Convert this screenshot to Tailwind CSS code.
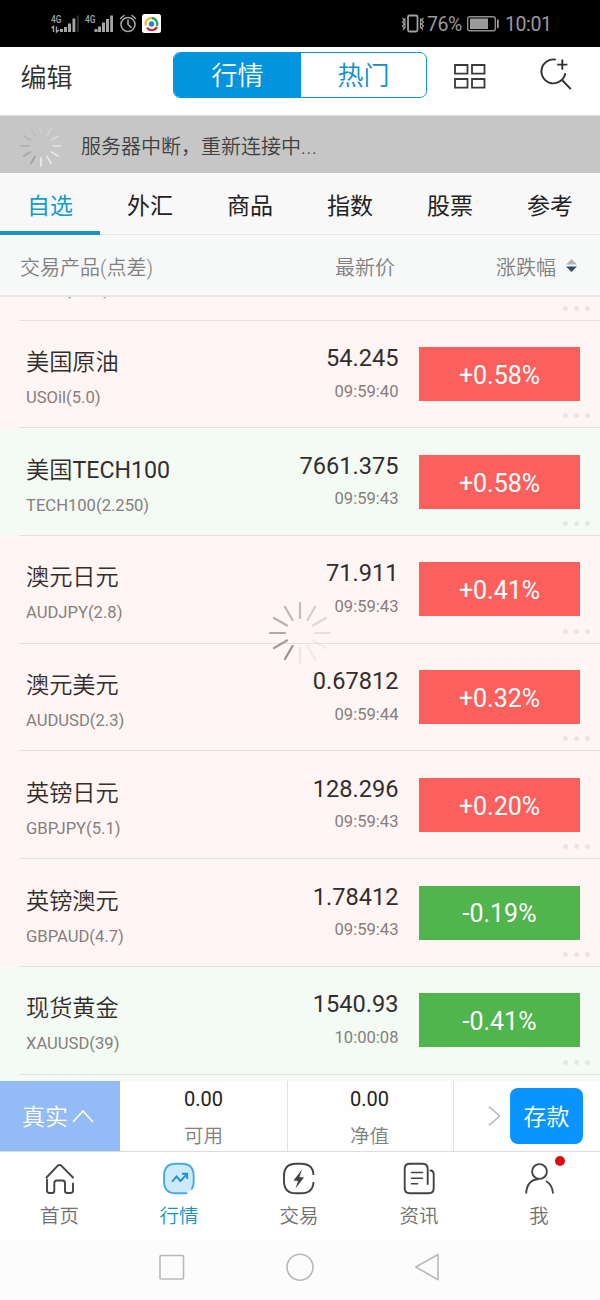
<!DOCTYPE html>
<html lang="zh-CN">
<head>
    <meta charset="UTF-8">
    <meta name="viewport" content="width=device-width, initial-scale=1.0">
    <title>行情</title>
    <script src="https://cdn.jsdelivr.net/npm/@tailwindcss/browser@4"></script>
</head>
<body class="bg-white">
<div class="relative w-[600px] h-[1300px] overflow-hidden flex flex-col whitespace-nowrap font-['Roboto','Noto_Sans_CJK_SC',sans-serif]">

    <!-- Status bar -->
    <div class="h-[47px] shrink-0 bg-black flex items-center text-[#9a9a9a]">
        <svg class="ml-[50px] w-[112px] h-[32px]" viewBox="50 8 112 32" fill="none">
            <g fill="#a5a5a5">
                <text x="51" y="22.5" font-size="10" font-weight="500" textLength="10.5" lengthAdjust="spacingAndGlyphs">4G</text>
                <text x="85" y="22.5" font-size="10" font-weight="500" textLength="10.5" lengthAdjust="spacingAndGlyphs">4G</text>
                <path d="M60 29h3v3h-3zM64 27h3v5h-3zM68 23.500h3v8.500h-3zM72.500 18.500h2.800v13.500h-2.800zM94.500 29h3v3h-3zM98 26.500h3v5.500h-3zM102 22.500h3v9.500h-3zM106 19h3v13h-3zM110.200 15.500h2.800v16.500h-2.800z"/>
                <path d="M76.700 15.500h2.300v16.500h-2.300z" fill="#2c2c2c"/>
            </g>
            <path d="M51.500 28l2-1.500V32M56.500 26.500V32l2.500-2" stroke="#a5a5a5" stroke-width="1.400"/>
            <g stroke="#a5a5a5" stroke-width="1.600" stroke-linecap="round">
                <circle cx="128" cy="24.500" r="7"/>
                <path d="M128 20v4.500l3 2.800M120.500 18.500l3.500-3M135.500 18.500l-3.500-3"/>
            </g>
            <rect x="142" y="14" width="19" height="19" rx="2.500" fill="#fff"/>
            <g stroke-width="2.400">
                <path d="M145.800 25.500a6 6 0 0 1 5.200-7.500" stroke="#e8c62b"/>
                <path d="M151.500 18a6 6 0 0 1 5.500 8" stroke="#2ca348"/>
                <path d="M157 27a6 6 0 0 1-10 .8" stroke="#d5263a"/>
            </g>
            <circle cx="151.500" cy="24" r="2.700" fill="#2483cf"/>
        </svg>
        <svg class="ml-[239px] w-[25px] h-[22px]" viewBox="401 13 25 22" fill="none" stroke="#a0a0a0">
            <rect x="408" y="15.500" width="9.500" height="16" rx="1.500" stroke-width="1.800"/>
            <path d="M402.500 18l2 2-2 2 2 2-2 2 2 2-1.500 2M405 18.500v10M420.500 18.500v10M423.500 18l-2 2 2 2-2 2 2 2-2 2 1.500 2" stroke-width="1.200"/>
        </svg>
        <span class="ml-[1px] pt-[2px] w-[36px] text-[19.5px] tracking-[-0.4px]">76%</span>
        <svg class="ml-[3px] w-[34px] h-[18px]" viewBox="466 15 34 18" fill="none">
            <rect x="467.700" y="16.700" width="27.600" height="14" rx="2" stroke="#8e8e8e" stroke-width="1.400"/>
            <path d="M470 18.500h18v10.500h-18z" fill="#9a9a9a"/>
            <path d="M497 19.500h1.800v8.500h-1.800z" fill="#9a9a9a"/>
        </svg>
        <span class="ml-[5px] pt-[2px] text-[19.5px] tracking-[-0.4px]">10:01</span>
    </div>

    <!-- Header -->
    <div class="h-[69px] shrink-0 flex items-start border-b border-[#ddd]">
        <div class="w-[173px] h-[59px] pt-[3px] pl-[20.5px] flex items-center text-[26px] font-[350] text-[#303030]">编辑</div>
        <div class="mt-[5px] w-[254px] h-[46px] flex rounded-[7px] border-[1.5px] border-[#0e95d6] overflow-hidden text-[26px] font-[350]">
            <div class="w-[127px] pt-[3px] bg-[#0394de] text-white flex items-center justify-center">行情</div>
            <div class="flex-1 pt-[3px] text-[#0d8fca] flex items-center justify-center">热门</div>
        </div>
        <svg class="ml-[26px] mt-[16px] w-[34px] h-[27px]" viewBox="453 63 34 27" fill="none" stroke="#3a3a3a" stroke-width="1.800">
            <path d="M455 65h12.500v8.600h-12.500zM472 65h12.500v8.600h-12.500zM455 79h12.500v8.600h-12.500zM472 79h12.500v8.600h-12.500z"/>
        </svg>
        <svg class="ml-[50px] mt-[9px] w-[38px] h-[38px]" viewBox="537 56 38 38" fill="none" stroke="#303030" stroke-width="1.900">
            <path d="M555.800 59.600a12 12 0 1 0 9.500 13.600M562.500 80.500l8.300 8.700M562.300 59.400v10.400M557.200 64.600h10.200"/>
        </svg>
    </div>

    <!-- Reconnect banner -->
    <div class="h-[57px] shrink-0 bg-[#c6c6c6] flex items-center">
        <svg class="ml-[19px] mt-[2px] w-[44px] h-[44px]" viewBox="-22 -22 44 44" stroke-width="1.600" stroke-linecap="round">
            <path d="M0-12v-8" stroke="#cccccc"/>
            <path d="M6-10.400l4-6.900" stroke="#d2d2d2"/>
            <path d="M10.400-6l6.900-4" stroke="#dadada"/>
            <path d="M12 0h8" stroke="#e2e2e2"/>
            <path d="M10.400 6l6.900 4" stroke="#e6e6e6"/>
            <path d="M6 10.400l4 6.900" stroke="#ebebeb"/>
            <path d="M0 12v8" stroke="#efefef"/>
            <path d="M-6 10.400l-4 6.900" stroke="#9c9c9c"/>
            <path d="M-10.400 6l-6.900 4" stroke="#a5a5a5"/>
            <path d="M-12 0h-8" stroke="#acacac"/>
            <path d="M-10.400-6l-6.900-4" stroke="#b4b4b4"/>
            <path d="M-6-10.400l-4-6.900" stroke="#bdbdbd"/>
        </svg>
        <span class="ml-[18px] pt-[5px] text-[20px] font-[350] text-[#404040]">服务器中断，重新连接中<span class="tracking-[0.7px]">...</span></span>
    </div>

    <!-- Category tabs -->
    <div class="h-[62px] shrink-0 bg-[#f8f8f8] border-b border-[#e6e8e8] flex text-[23px] text-[#222]">
        <div class="w-[100px] h-[62px] pt-[10px] border-b-4 border-[#1895c6] text-[#149bd2] flex items-center justify-center">自选</div>
        <div class="w-[100px] h-[62px] flex items-center justify-center pt-[6px]">外汇</div>
        <div class="w-[100px] h-[62px] flex items-center justify-center pt-[6px]">商品</div>
        <div class="w-[100px] h-[62px] flex items-center justify-center pt-[6px]">指数</div>
        <div class="w-[100px] h-[62px] flex items-center justify-center pt-[6px]">股票</div>
        <div class="w-[100px] h-[62px] flex items-center justify-center pt-[6px]">参考</div>
    </div>

    <!-- Column titles -->
    <div class="h-[62px] shrink-0 bg-[#f7f8f8] border-b-2 border-[#ebe6e6] flex items-center pt-[5px] text-[20px] font-[350] text-[#808080]">
        <span class="w-[200px] pl-[20px]">交易产品(点差)</span>
        <span class="w-[195px] text-right">最新价</span>
        <span class="w-[161px] text-right">涨跌幅</span>
        <svg class="ml-[9px] mb-[4px] w-[13px] h-[16px]" viewBox="0 0 13 16">
            <path d="M6.500 1l5.500 5.500h-11z" fill="#b3b3b3"/>
            <path d="M1 8.500h11l-5.500 5.500z" fill="#2d4d72"/>
        </svg>
    </div>

    <!-- Quotes, scrolled part of the way down -->
    <div class="h-[784px] shrink-0 overflow-hidden">
        <div id="quotes" class="mt-[-84.2px]"></div>
    </div>

    <!-- Account summary -->
    <div class="h-[71px] shrink-0 flex border-b border-[#dcdcdc] bg-[#fefefe]">
        <div class="w-[120px] h-[70px] bg-[#93bbf6] text-white flex items-center pl-[22px] text-[23px] font-[350]">
            <span class="pt-[4px]">真实</span>
            <svg class="ml-[4px] w-[22px] h-[16px]" viewBox="0 0 22 16" fill="none" stroke="#fff" stroke-width="1.600"><path d="M1 14L11 3l10 11"/></svg>
        </div>
        <div class="w-[168px] border-r border-[#e4e4e4] flex flex-col items-center text-[20px]">
            <span class="mt-[4px] leading-[28px] text-[#222]">0.00</span>
            <span class="mt-[9.5px] leading-[28px] font-[350] text-[19.5px] text-[#808080]">可用</span>
        </div>
        <div class="w-[166px] pr-[2px] border-r border-[#e4e4e4] flex flex-col items-center text-[20px]">
            <span class="mt-[4px] leading-[28px] text-[#222]">0.00</span>
            <span class="mt-[9.5px] leading-[28px] font-[350] text-[19.5px] text-[#808080]">净值</span>
        </div>
        <svg class="ml-[33px] mt-[24px] w-[14px] h-[22px]" viewBox="0 0 14 22" fill="none" stroke="#b5b5b5" stroke-width="1.500"><path d="M2 1.500L12.500 11 2 20.500"/></svg>
        <div class="ml-[9px] mt-[7px] pt-[4px] w-[73px] h-[56px] rounded-[8px] bg-[#0a94ff] text-white text-[23px] font-[350] flex items-center justify-center">存款</div>
    </div>

    <!-- Bottom navigation -->
    <div class="h-[87px] shrink-0 flex bg-white text-[19.5px] font-[350] text-[#707070]">
        <div class="w-[119px] pt-[9px] flex flex-col items-center">
            <svg class="w-[36px] h-[36px]" viewBox="-18 -18 36 36" fill="none" stroke="#444" stroke-width="1.900" stroke-linecap="round" stroke-linejoin="round">
                <path d="M-13.500-1.500L-2.500-13.200Q-.5-15 1.500-13.200L13-1.500M-13 .5V11.500Q-13 14-10.500 14H-8Q-5.700 14-5.700 11.700V4Q-5.700 1.500-3.200 1.500H2.500Q5 1.500 5 4V11.700Q5 14 7.300 14H10.500Q13 14 13 11.500V4.500"/>
            </svg>
            <span class="mt-[5.500px] leading-[28px]">首页</span>
        </div>
        <div class="w-[120px] pt-[9px] flex flex-col items-center text-[#1593bd]">
            <svg class="w-[36px] h-[36px]" viewBox="-18 -18 36 36" fill="none" stroke="#45aae8" stroke-width="1.900" stroke-linecap="round">
                <path d="M7 14.300H-4Q-15 14-15-1Q-15-15.300-3-15.300H2Q14.700-15.300 14.700-3V3Q14.700 8 12.500 10.500L7 14.300" fill="#cdeafb" stroke="none"/>
                <path d="M7.500 14.300H-3Q-15 14.300-15 2V-3Q-15-15.300-3-15.300H2.500Q14.700-15.300 14.700-3V3Q14.700 7 12.800 10"/>
                <path d="M-7 2.800L-2.500-2.500 1.500 2 8-5M3-5.300H8.200V0" stroke="#2691cf" stroke-linecap="butt"/>
            </svg>
            <span class="mt-[5.500px] leading-[28px]">行情</span>
        </div>
        <div class="w-[120px] pt-[9px] flex flex-col items-center">
            <svg class="w-[36px] h-[36px]" viewBox="-18 -18 36 36" fill="none" stroke="#444" stroke-width="1.900">
                <path d="M14.500-4Q14-15.300 2-15.300H-3Q-15-15.300-15-3V2Q-15 14.300-3 14.300H2Q14 14.300 14.500 3"/>
                <path d="M3-9.500L-5.500 1.500-1 2-3.500 9.500 5-1.500.500-2z" fill="#444" stroke="none"/>
            </svg>
            <span class="mt-[5.500px] leading-[28px]">交易</span>
        </div>
        <div class="w-[120px] pt-[9px] flex flex-col items-center">
            <svg class="w-[36px] h-[36px]" viewBox="-18 -18 36 36" fill="none" stroke="#444" stroke-width="1.900" stroke-linecap="round">
                <path d="M8.700 5V-10Q8.700-15.200 3.700-15.200H-9.300Q-14.300-15.200-14.300-10.200V9.300Q-14.300 14.300-9.300 14.300H9.700Q14.700 14.300 14.700 9.300V-5Q14.700-8.500 11.500-8.500"/>
                <path d="M-7.500-6.500H3.500M-7.500-.8H3.500M-7.500 4.700H-1.500" stroke-width="1.600"/>
            </svg>
            <span class="mt-[5.500px] leading-[28px]">资讯</span>
        </div>
        <div class="relative w-[120px] pt-[9px] flex flex-col items-center">
            <svg class="w-[36px] h-[36px]" viewBox="-18 -18 36 36" fill="none" stroke="#444" stroke-width="1.900">
                <circle cx="0.500" cy="-7.500" r="7.400"/>
                <path d="M-12.800 14.500Q-12.300 1-.3 0M7 2Q13.500 6 14 14.500"/>
            </svg>
            <span class="mt-[5.500px] leading-[28px]">我</span>
            <div class="absolute left-[76px] top-[4px] w-[10px] h-[10px] rounded-full bg-[#e20a12]"></div>
        </div>
    </div>

    <!-- System keys -->
    <div class="h-[61px] shrink-0 bg-[#fcfcfc]">
        <svg class="w-[600px] h-[61px]" viewBox="0 1239 600 61" fill="none" stroke="#b9b9b9" stroke-width="1.600" stroke-linejoin="round">
            <rect x="160" y="1255.500" width="23.500" height="23.500" rx="1"/>
            <circle cx="300" cy="1267.200" r="13"/>
            <path d="M438 1254.500v25.200L415.800 1267z"/>
        </svg>
    </div>

    <!-- Loading spinner over the list -->
    <svg class="absolute left-[268px] top-[601px] w-[64px] h-[64px]" viewBox="-32 -32 64 64" stroke="#817878" stroke-width="2.200" stroke-linecap="round">
        <path d="M0-15v-15" opacity=".45"/>
        <path d="M7.500-13l7.500-13" opacity=".32"/>
        <path d="M13-7.500l13-7.500" opacity=".24"/>
        <path d="M15 0h15" opacity=".17"/>
        <path d="M13 7.500l13 7.500" opacity=".08"/>
        <path d="M7.500 13l7.500 13" opacity=".1"/>
        <path d="M0 15v15" opacity=".12"/>
        <path d="M-7.500 13l-7.500 13" opacity=".8"/>
        <path d="M-13 7.500l-13 7.500" opacity=".7"/>
        <path d="M-15 0h-15" opacity=".62"/>
        <path d="M-13-7.500l-13-7.500" opacity=".55"/>
        <path d="M-7.500-13l-7.500-13" opacity=".5"/>
    </svg>
</div>

<script>
    // name, symbol(spread), price, time, change, row tint
    const quotes = [
        ['', 'US30(12.0)', '', '', '', 'red'],
        ['美国原油', 'USOil(5.0)', '54.245', '09:59:40', '+0.58%', 'red'],
        ['美国TECH100', 'TECH100(2.250)', '7661.375', '09:59:43', '+0.58%', 'green'],
        ['澳元日元', 'AUDJPY(2.8)', '71.911', '09:59:43', '+0.41%', 'red'],
        ['澳元美元', 'AUDUSD(2.3)', '0.67812', '09:59:44', '+0.32%', 'red'],
        ['英镑日元', 'GBPJPY(5.1)', '128.296', '09:59:43', '+0.20%', 'red'],
        ['英镑澳元', 'GBPAUD(4.7)', '1.78412', '09:59:43', '-0.19%', 'red'],
        ['现货黄金', 'XAUUSD(39)', '1540.93', '10:00:08', '-0.41%', 'green'],
        ['', '', '', '', '', 'green']
    ];

    document.getElementById('quotes').innerHTML = quotes.map(([name, symbol, price, time, change, tint]) => `
        <div class="h-[107.72px] ${tint === 'red' ? 'bg-[#fff5f4]' : 'bg-[#f3fbf4]'}">
            <div class="relative ml-[19px] h-full border-b border-[#e6e0df] flex pl-[7px] ${symbol ? '' : 'hidden'}">
                <div class="w-[220px] pt-[24.5px] flex flex-col">
                    <span class="h-[34px] leading-[34px] text-[23.2px] font-[350] text-[#332d2d]">${name.replace(/([A-Z0-9]+)/, '<span class="font-normal">$1</span>')}</span>
                    <span class="mt-[7px] leading-[24px] text-[16.6px] text-[#857f7e]">${symbol}</span>
                </div>
                <div class="w-[152.5px] pt-[20.5px] flex flex-col items-end">
                    <span class="h-[34px] leading-[34px] text-[23.6px] text-[#332d2d]">${price}</span>
                    <span class="mt-[4.5px] leading-[24px] text-[16.6px] text-[#857f7e]">${time}</span>
                </div>
                <div class="ml-[20.5px] mt-[26.5px] w-[161px] h-[54px] pt-[3px] flex items-center justify-center text-white text-[25px] ${change[0] === '-' ? 'bg-[#50b54c]' : 'bg-[#fc605c]'}">${change}</div>
                <div class="absolute right-[10px] bottom-[9px] flex gap-[6px]">
                    <i class="w-[5px] h-[5px] rounded-full bg-black/7"></i>
                    <i class="w-[5px] h-[5px] rounded-full bg-black/7"></i>
                    <i class="w-[5px] h-[5px] rounded-full bg-black/7"></i>
                </div>
            </div>
        </div>`).join('');
</script>
</body>
</html>
